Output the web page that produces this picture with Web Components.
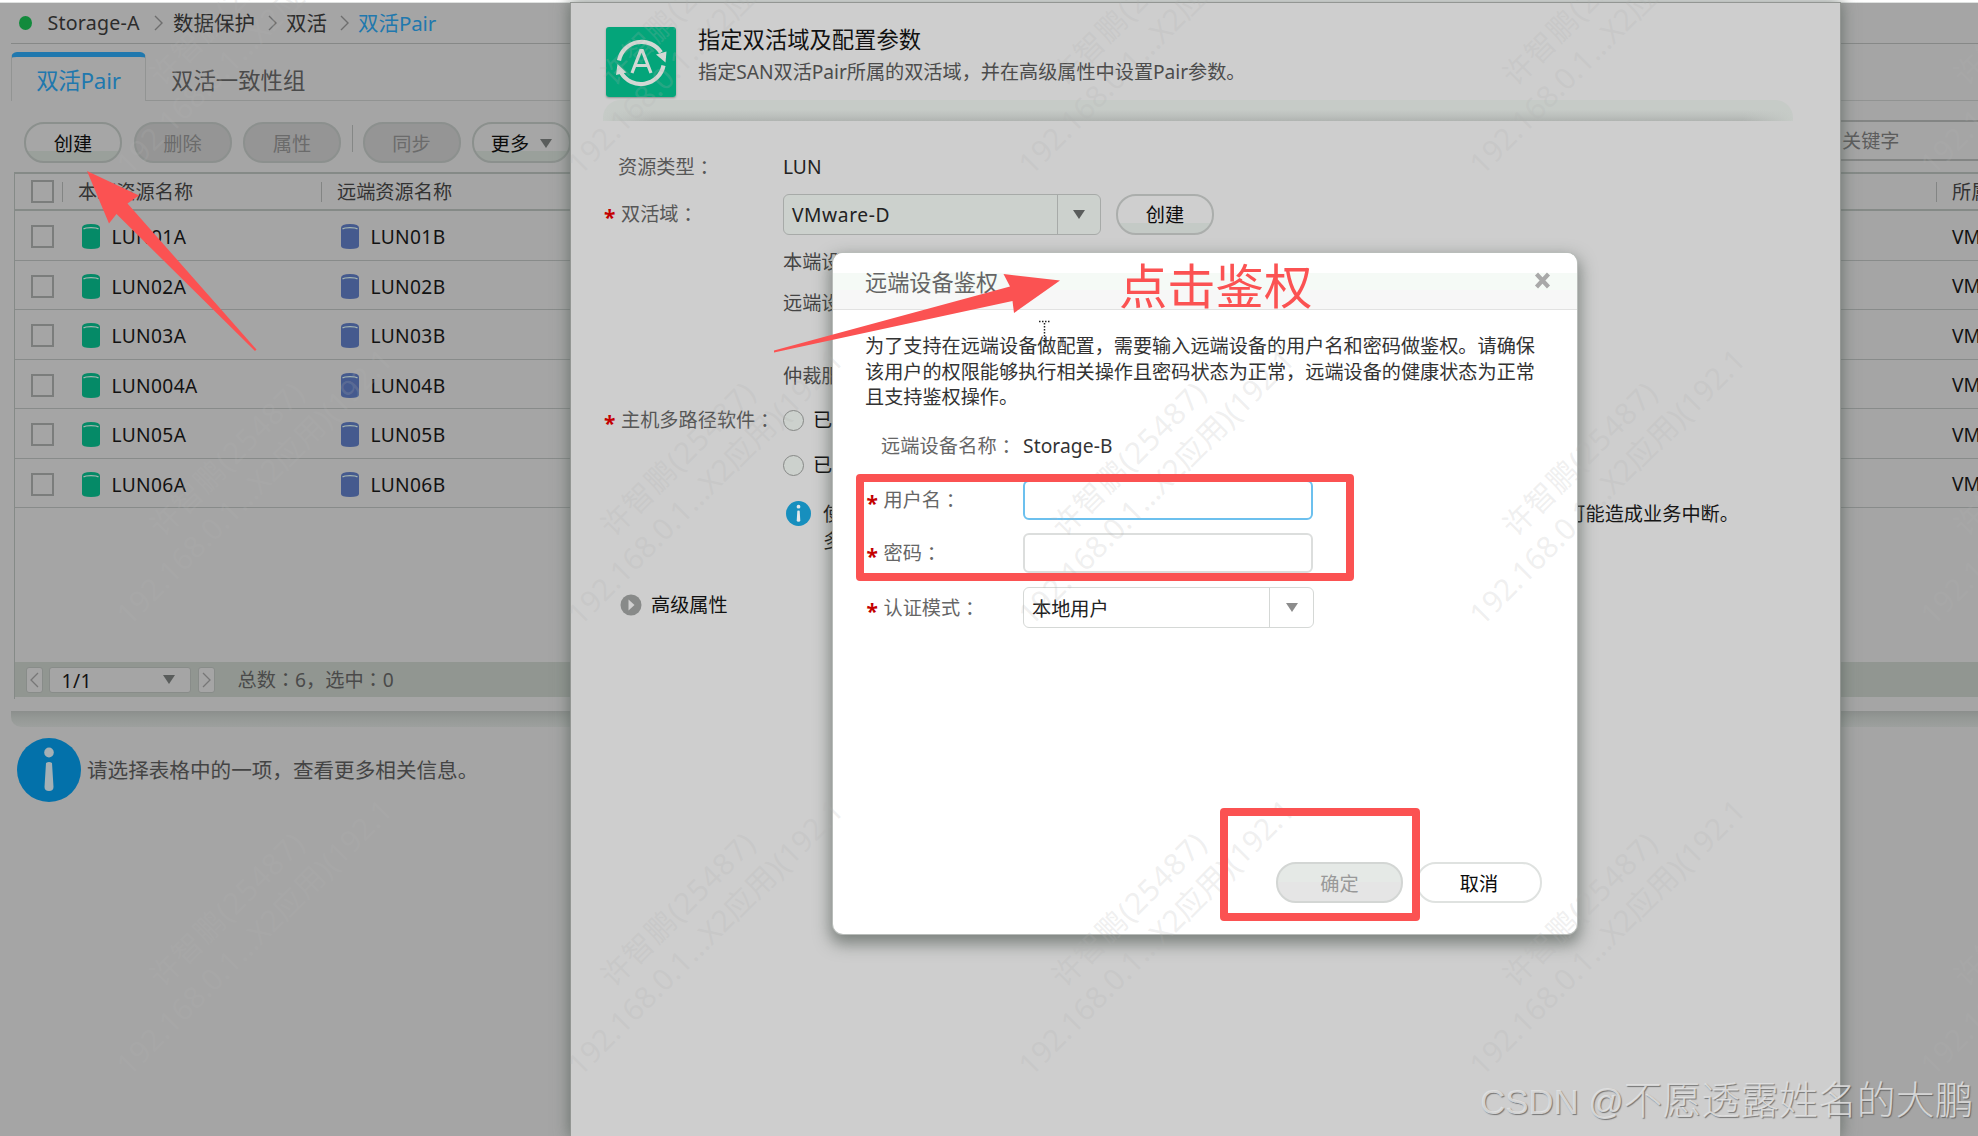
<!DOCTYPE html>
<html lang="zh-CN">
<head>
<meta charset="utf-8">
<title>Storage-A</title>
<style>
    html, body { margin: 0; height: 100%; overflow: hidden; }
    body {
        font-family: "Noto Sans", "Noto Sans CJK SC", sans-serif;
        font-size: 19.2px;
        line-height: 26px;
        color: #222;
        background: #a5a5a5;
    }
</style>
</head>
<body>
<dm-app></dm-app>

<script>
// small helper: shadow root with the given markup
function define(name, html, init) {
    customElements.define(name, class extends HTMLElement {
        constructor() {
            super();
            this.attachShadow({mode: "open"});
            this.shadowRoot.innerHTML = html;
        }
        connectedCallback() {
            if (init) init.call(this, this.shadowRoot);
        }
    });
}

define('dm-checkbox', `
    <style>
        :host { display: block; box-sizing: border-box; width: 23px; height: 23px; border: 2px solid #7b7d7c; }
    </style>`);

define('dm-lun-icon', `
    <style>
        :host { display: block; width: 18px; height: 25px; color: #058a67; }
        :host([remote]) { color: #455a8e; }
        svg { display: block; }
    </style>
    <svg width="18" height="25" viewBox="0 0 18 25">
        <path d="M0 4Q0 0 9 0T18 4V22Q18 25 9 25T0 22Z" fill="currentColor"/>
        <path d="M1.5 5Q3 3.6 9 3.6T16.5 5" fill="none" stroke="#a5b5b0" stroke-width="1.2"/>
    </svg>`);

define('dm-arrow', `
    <style>
        :host { display: block; width: 0; border: 6.5px solid transparent; border-top: 9px solid #5a5d5c; border-bottom: 0; }
    </style>`);

define('dm-button', `
    <style>
        :host {
            display: flex; align-items: center; justify-content: center; gap: 11px; padding-top: 2px;
            box-sizing: border-box; width: 98px; height: 41px; border-radius: 20px; flex: none;
            border: 2px solid #8b908d; color: #0c0c0c; white-space: nowrap;
            background: linear-gradient(#a6a6a6 72%, #9aa09b 73%);
        }
        :host([disabled]) { background: #959595; border-color: #8c908e; color: #6b6b6b; }
        :host([tone=drawer]) { border-color: #abaeac; background: linear-gradient(#cfcfcf 72%, #c4cac6 73%); }
        :host([tone=dialog]) { border-color: #dfe2e0; background: #fff; width: 126px; }
        :host([tone=dialog][disabled]) { border-color: #d3d6d4; background: linear-gradient(#e5e9e6 50%, #e5e5e5 50%); color: #999; width: 127px; }
    </style>
    <slot></slot>`);

define('dm-breadcrumb', `
    <style>
        :host { display: flex; align-items: center; height: 40px; margin-left: 11px; padding-left: 8px; border-bottom: 1.5px solid #868887; font-size: 20.5px; color: #2c2c2c; }
        .dot { width: 13px; height: 14px; border-radius: 50%; background: #128a3c; margin-right: 15.5px; }
        svg { margin: 0 9px 0 13px; }
        svg.first { margin: 0 10.5px 0 14px; }
        .name { font-size: 19.6px; letter-spacing: .2px; }
        .last { color: #2078ae; letter-spacing: -.1px; }
    </style>
    <span class="dot"></span>
    <span class="name">Storage-A</span><svg class="first" width="9" height="16"><path d="M1 1l7 7-7 7" fill="none" stroke="#6e6e6e" stroke-width="1.4"/></svg>
    <span>数据保护</span><svg width="9" height="16"><path d="M1 1l7 7-7 7" fill="none" stroke="#6e6e6e" stroke-width="1.4"/></svg>
    <span>双活</span><svg width="9" height="16"><path d="M1 1l7 7-7 7" fill="none" stroke="#6e6e6e" stroke-width="1.4"/></svg>
    <span class="last">双活Pair</span>`);

define('dm-tabs', `
    <style>
        :host { display: flex; margin: 8px 0 0 11px; height: 49px; font-size: 22.4px; color: #4b4b4b; }
        .tab { display: flex; align-items: center; justify-content: center; box-sizing: border-box; width: 135px;
            border: 1.5px solid #929493; border-top: 5px solid #2078ae; border-bottom: 0; border-radius: 6px 6px 0 0; color: #2078ae; padding-top: 4px; letter-spacing: -.2px; }
        .rest { display: flex; align-items: center; flex: 1; padding: 9px 0 0 25px; border-bottom: 1.5px solid #919392; }
    </style>
    <div class="tab"><span>双活Pair</span></div>
    <div class="rest"><span>双活一致性组</span></div>`);

define('dm-toolbar', `
    <style>
        :host { display: flex; align-items: flex-start; gap: 11.5px; height: 50px; padding: 21px 0 0 24px; }
        i { width: 1.5px; height: 27px; margin-top: 3px; background: #858786; }
        .search { margin: -2px 0 0 auto; width: 155px; height: 41px; box-sizing: border-box; padding-left: 19px;
            border: solid #838584; border-width: 2px 0; color: #5c5c5c; display: flex; align-items: center; }
    </style>
    <dm-button>创建</dm-button>
    <dm-button disabled>删除</dm-button>
    <dm-button disabled>属性</dm-button>
    <i style="margin-left:-1px"></i>
    <dm-button disabled style="margin-left:-2px">同步</dm-button>
    <dm-button style="width:99px">更多<dm-arrow></dm-arrow></dm-button>
    <div class="search">关键字</div>`);

define('dm-table', `
    <style>
        :host { display: flex; flex-direction: column; height: 527px; margin-left: 14px; border-left: 1.5px solid #858a87; box-sizing: border-box; }
        .head, .row { display: grid; grid-template-columns: 47px 259px 1fr 42px; box-sizing: border-box; align-items: center; }
        .head { height: 39px; border: solid #858a87; border-width: 2px 0; color: #333; }
        .head div { border-left: 1.5px solid #838584; height: 20px; line-height: 20px; padding-left: 15px; white-space: nowrap; overflow: visible; }
        dm-checkbox { margin-left: 16px; }
        .row { height: 49.5px; border-bottom: 1.5px solid #888b8a; color: #121212; padding-top: 3px; }
        .cell { display: flex; align-items: center; gap: 12px; padding-left: 19.5px; letter-spacing: .35px; }
        .cell span { padding-top: 1px; }
        .vm { padding-left: 16px; }
        .pager { display: flex; align-items: center; height: 35px; margin: auto 0 2px; padding-left: 10.5px; background: #919691; color: #4a4a4a; }
        .step, .page { box-sizing: border-box; height: 26px; border: 1.5px solid #888c89; border-radius: 3px; background: #a5a5a5; display: flex; align-items: center; justify-content: center; }
        .step { width: 17px; }
        .page { width: 142px; margin: 0 7px 0 6px; padding: 0 15px 0 12px; justify-content: space-between; color: #111; letter-spacing: .5px; }
        .page span { padding-top: 3px; }
        .total { margin-left: 23px; }
        /* centred punctuation */
        .total b { font-weight: 400; font-family: "Noto Sans CJK TC"; line-height: 20px; }
    </style>
    <div class="head">
        <dm-checkbox></dm-checkbox>
        <div>本端资源名称</div><div>远端资源名称</div><div>所属</div>
    </div>
    <div class="pager">
        <span class="step"><svg width="9" height="16"><path d="M8 1L1 8l7 7" fill="none" stroke="#777" stroke-width="1.3"/></svg></span>
        <span class="page"><span>1/1</span><dm-arrow></dm-arrow></span>
        <span class="step"><svg width="9" height="16"><path d="M1 1l7 7-7 7" fill="none" stroke="#777" stroke-width="1.3"/></svg></span>
        <span class="total">总数<b lang="zh-TW">：</b>6，选中<b lang="zh-TW">：</b>0</span>
    </div>`, function (root) {
        const pager = root.querySelector('.pager');
        ['01', '02', '03', '004', '05', '06'].forEach(n => {
            const row = document.createElement('div');
            row.className = 'row';
            row.innerHTML = `<dm-checkbox></dm-checkbox>
                <div class="cell"><dm-lun-icon></dm-lun-icon><span>LUN${n}A</span></div>
                <div class="cell"><dm-lun-icon remote></dm-lun-icon><span>LUN${n.slice(-2)}B</span></div>
                <div class="vm">VM</div>`;
            pager.before(row);
        });
    });

define('dm-info', `
    <style>
        :host { display: block; flex: none; }
        svg { display: block; width: 100%; height: 100%; }
    </style>
    <svg viewBox="0 0 64 64">
        <circle cx="32" cy="32" r="32" fill="var(--info, #0371aa)"/>
        <ellipse cx="32" cy="14.5" rx="4.8" ry="5" fill="var(--mark, #a5b0b5)"/>
        <path d="M29 25Q32 23 35 25L36.5 49Q36.500 53 32 53T27.500 49Z" fill="var(--mark, #a5b0b5)"/>
    </svg>`);

define('dm-page', `
    <style>
        :host { display: block; height: 100%; background: #a5a5a5; overflow: hidden; }
        .top { height: 3px; background: linear-gradient(#fff 60%, #c8ccca); }
        .split { height: 16px; margin: 12px 0 11px 11px; border-radius: 0 0 0 10px; background: linear-gradient(#8b8e8c, #949895 40%, #9da09e); }
        .hint { display: flex; align-items: center; gap: 6px; padding-left: 17px; color: #444; font-size: 20.6px; }
        dm-info { width: 64px; height: 64px; }
    </style>
    <div class="top"></div>
    <dm-breadcrumb></dm-breadcrumb>
    <dm-tabs></dm-tabs>
    <dm-toolbar></dm-toolbar>
    <dm-table></dm-table>
    <div class="split"></div>
    <div class="hint"><dm-info></dm-info><span>请选择表格中的一项，查看更多相关信息。</span></div>`);

// label + control line of a form
define('dm-field', `
    <style>
        :host { display: flex; align-items: center; }
        .label { display: flex; align-items: center; flex: none; width: var(--label, 178px); color: var(--label-color, #575757); white-space: nowrap; }
        .star { box-sizing: border-box; width: 17px; margin-left: -1px; flex: none; color: #c40000; font-size: 21px; line-height: 20px; font-weight: bold; display: none; padding-top: 3px; height: 20px; }
        :host([required]) .star { display: block; }
        .colon { font-family: "Noto Sans CJK TC"; }
    </style>
    <div class="label"><span class="star">*</span><span class="text"></span><span class="colon" lang="zh-TW">：</span></div>
    <slot></slot>`, function (root) {
        const text = this.getAttribute('label');
        if (text) root.querySelector('.text').textContent = text;
        else root.querySelector('.label').innerHTML = '';
    });

define('dm-select', `
    <style>
        :host { display: flex; align-items: center; box-sizing: border-box; height: 41px; border: 1.5px solid #a7aaa8; border-radius: 6px; background: #ccd1cd; color: #222; }
        span { flex: 1; padding: 2px 0 0 8px; letter-spacing: .6px; }
        i { display: flex; align-items: center; justify-content: center; width: var(--drop, 43px); height: 100%; box-sizing: border-box; border-left: 1.5px solid #a7aaa8; }
        :host([light]) { background: #fff; border-color: #d5d8d6; }
        :host([light]) span { letter-spacing: 0; }
        :host([light]) i { border-color: #d5d8d6; }
        :host([light]) dm-arrow { border-top-color: #8c8c8c; }
    </style>
    <span><slot></slot></span><i><dm-arrow></dm-arrow></i>`);

define('dm-input', `
    <style>
        :host { display: block; box-sizing: border-box; width: 290px; height: 40px; border: 2px solid #dcdedd; border-radius: 6px; background: #fff; }
        :host([focused]) { border-color: #6cc0ee; }
    </style>`);

define('dm-radio', `
    <style>
        :host { display: flex; align-items: center; gap: 9px; color: #111; }
        i { width: 19px; height: 19px; border: 1.5px solid #868886; border-radius: 50%; background: #ccd1cd; }
    </style>
    <i></i><slot></slot>`);

define('dm-drawer', `
    <style>
        :host { display: block; box-sizing: border-box; background: #cecece; padding: 24px 0 0 34px; box-shadow: 0 0 0 1px #939693, 0 0 14px 2px rgba(90, 100, 93, .75); overflow: hidden; }
        header { display: flex; gap: 22px; height: 73px; }
        header svg { margin-left: 1px; border-radius: 3px; box-shadow: 0 1px 2px #8e9490; flex: none; }
        h1 { margin: 0; font-size: 22.3px; font-weight: 400; line-height: 26px; color: #111; }
        p { margin: 6px 0 0; color: #4c4c4c; white-space: nowrap; letter-spacing: -.05px; }
        .rule { height: 21px; width: 1190px; margin-left: -2px; border-radius: 18px 18px 0 0; background: linear-gradient(90deg, #c6cbc7, transparent 50px, transparent 1140px, #c6cbc7), linear-gradient(#c6cbc7 0 45%, #bcc0bd 75%, #b0b4b1); }
        .note { display: flex; align-items: flex-start; margin: 14px 0 0 181px; width: 953px; color: #161616; line-height: 27px; }
        .note dm-info { width: 25px; height: 25px; margin: 1px 12px 0 0; --info: #178fbe; --mark: #e4e8ea; }
        .note div { flex: 1; }
        .adv { display: flex; align-items: center; gap: 9px; height: 42px; margin: 30px 0 0 15px; color: #111; }
    </style>
    <header>
        <svg width="70" height="70" viewBox="0 0 70 70">
            <rect width="70" height="70" fill="#04a57a"/>
            <g fill="none" stroke="#d3d8d4" stroke-width="4.200">
                <path d="M13 33.500A23 23 0 0 1 55 25.500"/>
                <path d="M57.500 38.500A23 23 0 0 1 15 45.500"/>
            </g>
            <path d="M50 27.500L60.500 24.500 59.500 35.500Z M11.500 37L20.500 45.500 10 48Z" fill="#d3d8d4"/>
            <path d="M26 46L34.700 23.500h1.600L45 46M29.500 38.500h12" fill="none" stroke="#d3d8d4" stroke-width="3.200"/>
        </svg>
        <div>
            <h1>指定双活域及配置参数</h1>
            <p>指定SAN双活Pair所属的双活域，并在高级属性中设置Pair参数。</p>
        </div>
    </header>
    <div class="rule"></div>
    <dm-field label="资源类型" style="height:50px;margin:21px 0 -2px 13px;--label:165px">LUN</dm-field>
    <dm-field label="双活域" required style="height:48px">
        <dm-select style="width:318px">VMware-D</dm-select>
        <dm-button tone="drawer" style="margin-left:15px">创建</dm-button>
    </dm-field>
    <dm-field style="height:48px;color:#444">本端设</dm-field>
    <dm-field style="height:34px;color:#444">远端设</dm-field>
    <dm-field style="height:40px;margin-top:36px;color:#444">仲裁服</dm-field>
    <dm-field label="主机多路径软件" required style="height:48px"><dm-radio>已</dm-radio></dm-field>
    <dm-field style="height:42px"><dm-radio>已</dm-radio></dm-field>
    <div class="note"><dm-info></dm-info><div>使<br>多</div><span>可能造成业务中断。</span></div>
    <div class="adv">
        <svg width="22" height="22" viewBox="0 0 22 22"><circle cx="11" cy="11" r="10.500" fill="#888a89"/><path d="M8.500 5.500L14.500 11l-6 5.500Z" fill="#d0d0d0"/></svg>
        <span>高级属性</span>
    </div>`);

define('dm-dialog', `
    <style>
        :host { display: flex; flex-direction: column; box-sizing: border-box; background: #fff; border-radius: 10px;
            box-shadow: 0 0 0 1px #b9bdba, 0 7px 16px 3px rgba(70, 80, 73, .6); overflow: hidden; --label: 158px; --label-color: #666; }
        header { display: flex; align-items: center; justify-content: space-between; box-sizing: border-box; height: 57px; padding: 3px 26px 0 32px;
            border-bottom: 1.5px solid #e2e2e2; font-size: 22.2px; color: #656565; background: linear-gradient(#fff 20px, #f5faf6 20px 37px, #f7f7f7 37px); }
        header svg { margin-bottom: 4px; }
        .body { flex: 1; padding: 24px 32px 0; }
        p { margin: 0 0 15px; line-height: 25.5px; font-size: 19.15px; color: #333; width: 675px; }
        dm-field { height: 40px; margin-bottom: 13px; }
        dm-field[required] { padding-left: 2.5px; --label: 155.500px; }
        footer { display: flex; justify-content: flex-end; gap: 13px; padding: 0 35px 31px; }
    </style>
    <header><span><slot name="title"></slot></span>
        <svg width="17" height="17"><path d="M2.500 2l12 13M14.500 2l-12 13" stroke="#a9a9a9" stroke-width="4.200"/></svg></header>
    <div class="body">
        <p><slot name="text"></slot></p>
        <dm-field label="远端设备名称" style="padding-left:16px;--label:142px;margin-bottom:14px;color:#333;letter-spacing:.1px">Storage-B</dm-field>
        <dm-field label="用户名" required><dm-input focused></dm-input></dm-field>
        <dm-field label="密码" required><dm-input></dm-input></dm-field>
        <dm-field label="认证模式" required style="margin-top:15px"><dm-select light style="width:291px;--drop:44px">本地用户</dm-select></dm-field>
    </div>
    <footer><dm-button tone="dialog" disabled>确定</dm-button><dm-button tone="dialog">取消</dm-button></footer>`);

// repeated diagonal user stamp
define('dm-stamp', `
    <style>
        :host { display: block; }
        svg { display: block; font-size: 30px; }
    </style>
    <svg width="1978" height="1136" fill="rgba(178,178,178,.2)" text-anchor="middle"></svg>`, function (root) {
        let out = '';
        for (let y = 22; y < 1300; y += 450.5) {
            for (let x = 240; x < 2200; x += 451) {
                out += `<g transform="translate(${x} ${y}) rotate(-45)">
                    <text y="-8" textLength="203">许智鹏(25487)</text>
                    <text y="31" textLength="375">192.168.0.1...X2应用)(192.1</text></g>`;
            }
        }
        root.querySelector('svg').innerHTML = out;
    });

// red arrows, frames and caption drawn above everything
define('dm-marks', `
    <style>
        :host { display: block; }
        svg { display: block; }
    </style>
    <svg width="1978" height="1136" viewBox="0 0 1978 1136">
        <g fill="#fb5252">
            <path d="M87 171L139 195.500 127.500 203.500 256.500 349.500 255 351 116.500 214 109 223.500Z"/>
            <path d="M1060 280.500L1003.500 274 1010 286.500 774 350.500V352.500L1012.500 301 1014 313Z"/>
            <text x="1119" y="304" font-size="48.300">点击鉴权</text>
        </g>
        <g fill="none" stroke="#fb5252" stroke-width="8" stroke-linejoin="round">
            <rect x="860" y="478" width="490" height="99"/>
            <rect x="1224" y="812" width="192" height="105"/>
        </g>
        <path d="M1039 321.500h11M1044.500 323v24" stroke="#222" stroke-width="1.500" stroke-dasharray="1.500 1.500"/>
    </svg>`);

define('dm-credit', `
    <style>
        :host { display: block; font-size: 38.9px; line-height: 50px; color: rgba(228, 228, 228, .85); text-shadow: 1px 1px 1px rgba(80, 80, 80, .7); white-space: nowrap; font-family: "Noto Sans CJK SC", sans-serif; font-weight: 300; }
        span { font-family: "Liberation Sans", sans-serif; font-size: 35px; letter-spacing: -.15px; }
    </style>
    <span>CSDN @</span>不愿透露姓名的大鹏`);

define('dm-app', `
    <style>
        :host { display: block; position: relative; width: 1978px; height: 1136px; overflow: hidden; }
        dm-drawer { position: absolute; left: 571px; top: 3px; width: 1269px; height: 1133px; }
        dm-dialog { position: absolute; left: 833px; top: 253px; width: 744px; height: 681px; }
        dm-stamp, dm-marks { position: absolute; left: 0; top: 0; }
        dm-credit { position: absolute; left: 1480px; top: 1072px; }
    </style>
    <dm-page></dm-page>
    <dm-drawer></dm-drawer>
    <dm-dialog>
        <span slot="title">远端设备鉴权</span>
        <span slot="text">为了支持在远端设备做配置，需要输入远端设备的用户名和密码做鉴权。请确保该用户的权限能够执行相关操作且密码状态为正常，远端设备的健康状态为正常且支持鉴权操作。</span>
    </dm-dialog>
    <dm-stamp></dm-stamp>
    <dm-marks></dm-marks>
    <dm-credit></dm-credit>`);
</script>
</body>
</html>
